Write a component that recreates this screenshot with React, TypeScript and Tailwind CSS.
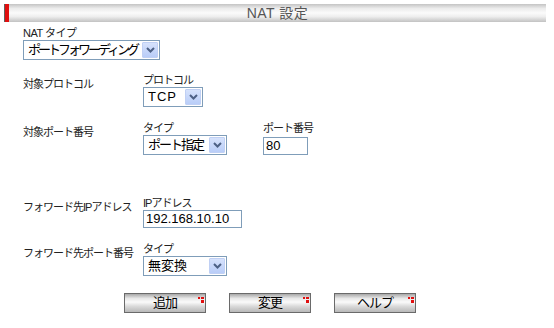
import React from "react";

function Arrow() {
  return (
    <div className="w-[16px] h-[16px] mr-[1px] border border-[#c0d0f4] rounded-[1px] bg-[linear-gradient(to_bottom,#d6e2fc,#b9cdf8)] flex items-center justify-center">
      <svg width="9" height="6" viewBox="0 0 9 6">
        <path d="M1 1 L4.5 4.5 L8 1" fill="none" stroke="#4d6185" strokeWidth="2" />
      </svg>
    </div>
  );
}

function Select({ text, w, ls }: { text: string; w: string; ls: string }) {
  return (
    <div className={`${w} h-[20px] border border-[#7f9db9] bg-white flex items-center`}>
      <span className={`flex-1 pl-[4px] text-[13px] leading-[14px] text-black whitespace-nowrap ${ls}`}>{text}</span>
      <Arrow />
    </div>
  );
}

function Btn({ label }: { label: string }) {
  return (
    <div className="relative w-[82px] h-[20px] border border-[#6a6a6a] bg-[linear-gradient(to_bottom,#a8a8a8,#e8e8e8_25%,#fafafa_45%,#d8d8d8_70%,#b8b8b8)] flex items-center justify-center text-[13px] text-black">
      <span className="tracking-[-1px]">{label}</span>
      <div className="absolute left-[73px] top-[3px] w-[2px] h-[2px] bg-[#e01010]" />
      <div className="absolute left-[76px] top-[3px] w-[3px] h-[2px] bg-[#e01010]" />
      <div className="absolute left-[76px] top-[6px] w-[3px] h-[3px] bg-[#e01010]" />
    </div>
  );
}

function Block({
  label,
  children,
  mt,
}: {
  label: string;
  children: React.ReactNode;
  mt: string;
}) {
  return (
    <div className={`flex ${mt}`}>
      <div className="w-[120px] pt-[4px] text-[11px] leading-[13px] tracking-[-1px] text-[#222] whitespace-nowrap">{label}</div>
      <div className="flex gap-[36px]">{children}</div>
    </div>
  );
}

function Sub({ label, children }: { label: string; children: React.ReactNode }) {
  return (
    <div className="flex flex-col">
      <div className="h-[13px] text-[11px] leading-[13px] tracking-[-1px] text-[#222] whitespace-nowrap">{label}</div>
      {children}
    </div>
  );
}

export default function App() {
  return (
    <div className="w-[554px] h-[328px] bg-white font-['Liberation_Sans','Noto_Sans_CJK_JP',sans-serif] overflow-hidden">
      <div className="ml-[4px] mr-[8px] mt-[4px] h-[18px] flex border-l border-[#606060] bg-[linear-gradient(to_bottom,#c4c4c4,#ececec_25%,#fbfbfb_50%,#eeeeee_70%,#c2c2c2)]">
        <div className="w-[4px] bg-[#e01010]" />
        <div className="flex-1 flex items-center justify-center text-[14px] leading-[16px] font-normal text-[#555] tracking-[0.5px]">
          NAT 設定
        </div>
      </div>

      <div className="pl-[23px]">
        <div className="mt-[5px] h-[13px] text-[11px] leading-[13px] tracking-[-0.5px] text-[#222]">NAT タイプ</div>
        <Select text="ポートフォワーディング" w="w-[137px]" ls="tracking-[-3px]" />

        <Block label="対象プロトコル" mt="mt-[14px]">
          <Sub label="プロトコル">
            <Select text="TCP" w="w-[60px]" ls="tracking-[1px]" />
          </Sub>
        </Block>

        <Block label="対象ポート番号" mt="mt-[15px]">
          <Sub label="タイプ">
            <Select text="ポート指定" w="w-[84px]" ls="tracking-[-2px]" />
          </Sub>
          <Sub label="ポート番号">
            <div className="mt-[2px] w-[45px] h-[18px] border border-[#7f9db9] bg-white flex items-center pl-[2px] text-[13px] text-black">
              80
            </div>
          </Sub>
        </Block>

        <Block label="フォワード先IPアドレス" mt="mt-[42px]">
          <Sub label="IPアドレス">
            <div className="w-[99px] h-[18px] border border-[#7f9db9] bg-white flex items-center pl-[2px] text-[13px] text-black">
              192.168.10.10
            </div>
          </Sub>
        </Block>

        <Block label="フォワード先ポート番号" mt="mt-[15px]">
          <Sub label="タイプ">
            <Select text="無変換" w="w-[84px]" ls="tracking-[0px]" />
          </Sub>
        </Block>
      </div>

      <div className="mt-[17px] pl-[124px] flex gap-[23px]">
        <Btn label="追加" />
        <Btn label="変更" />
        <Btn label="ヘルプ" />
      </div>
    </div>
  );
}
